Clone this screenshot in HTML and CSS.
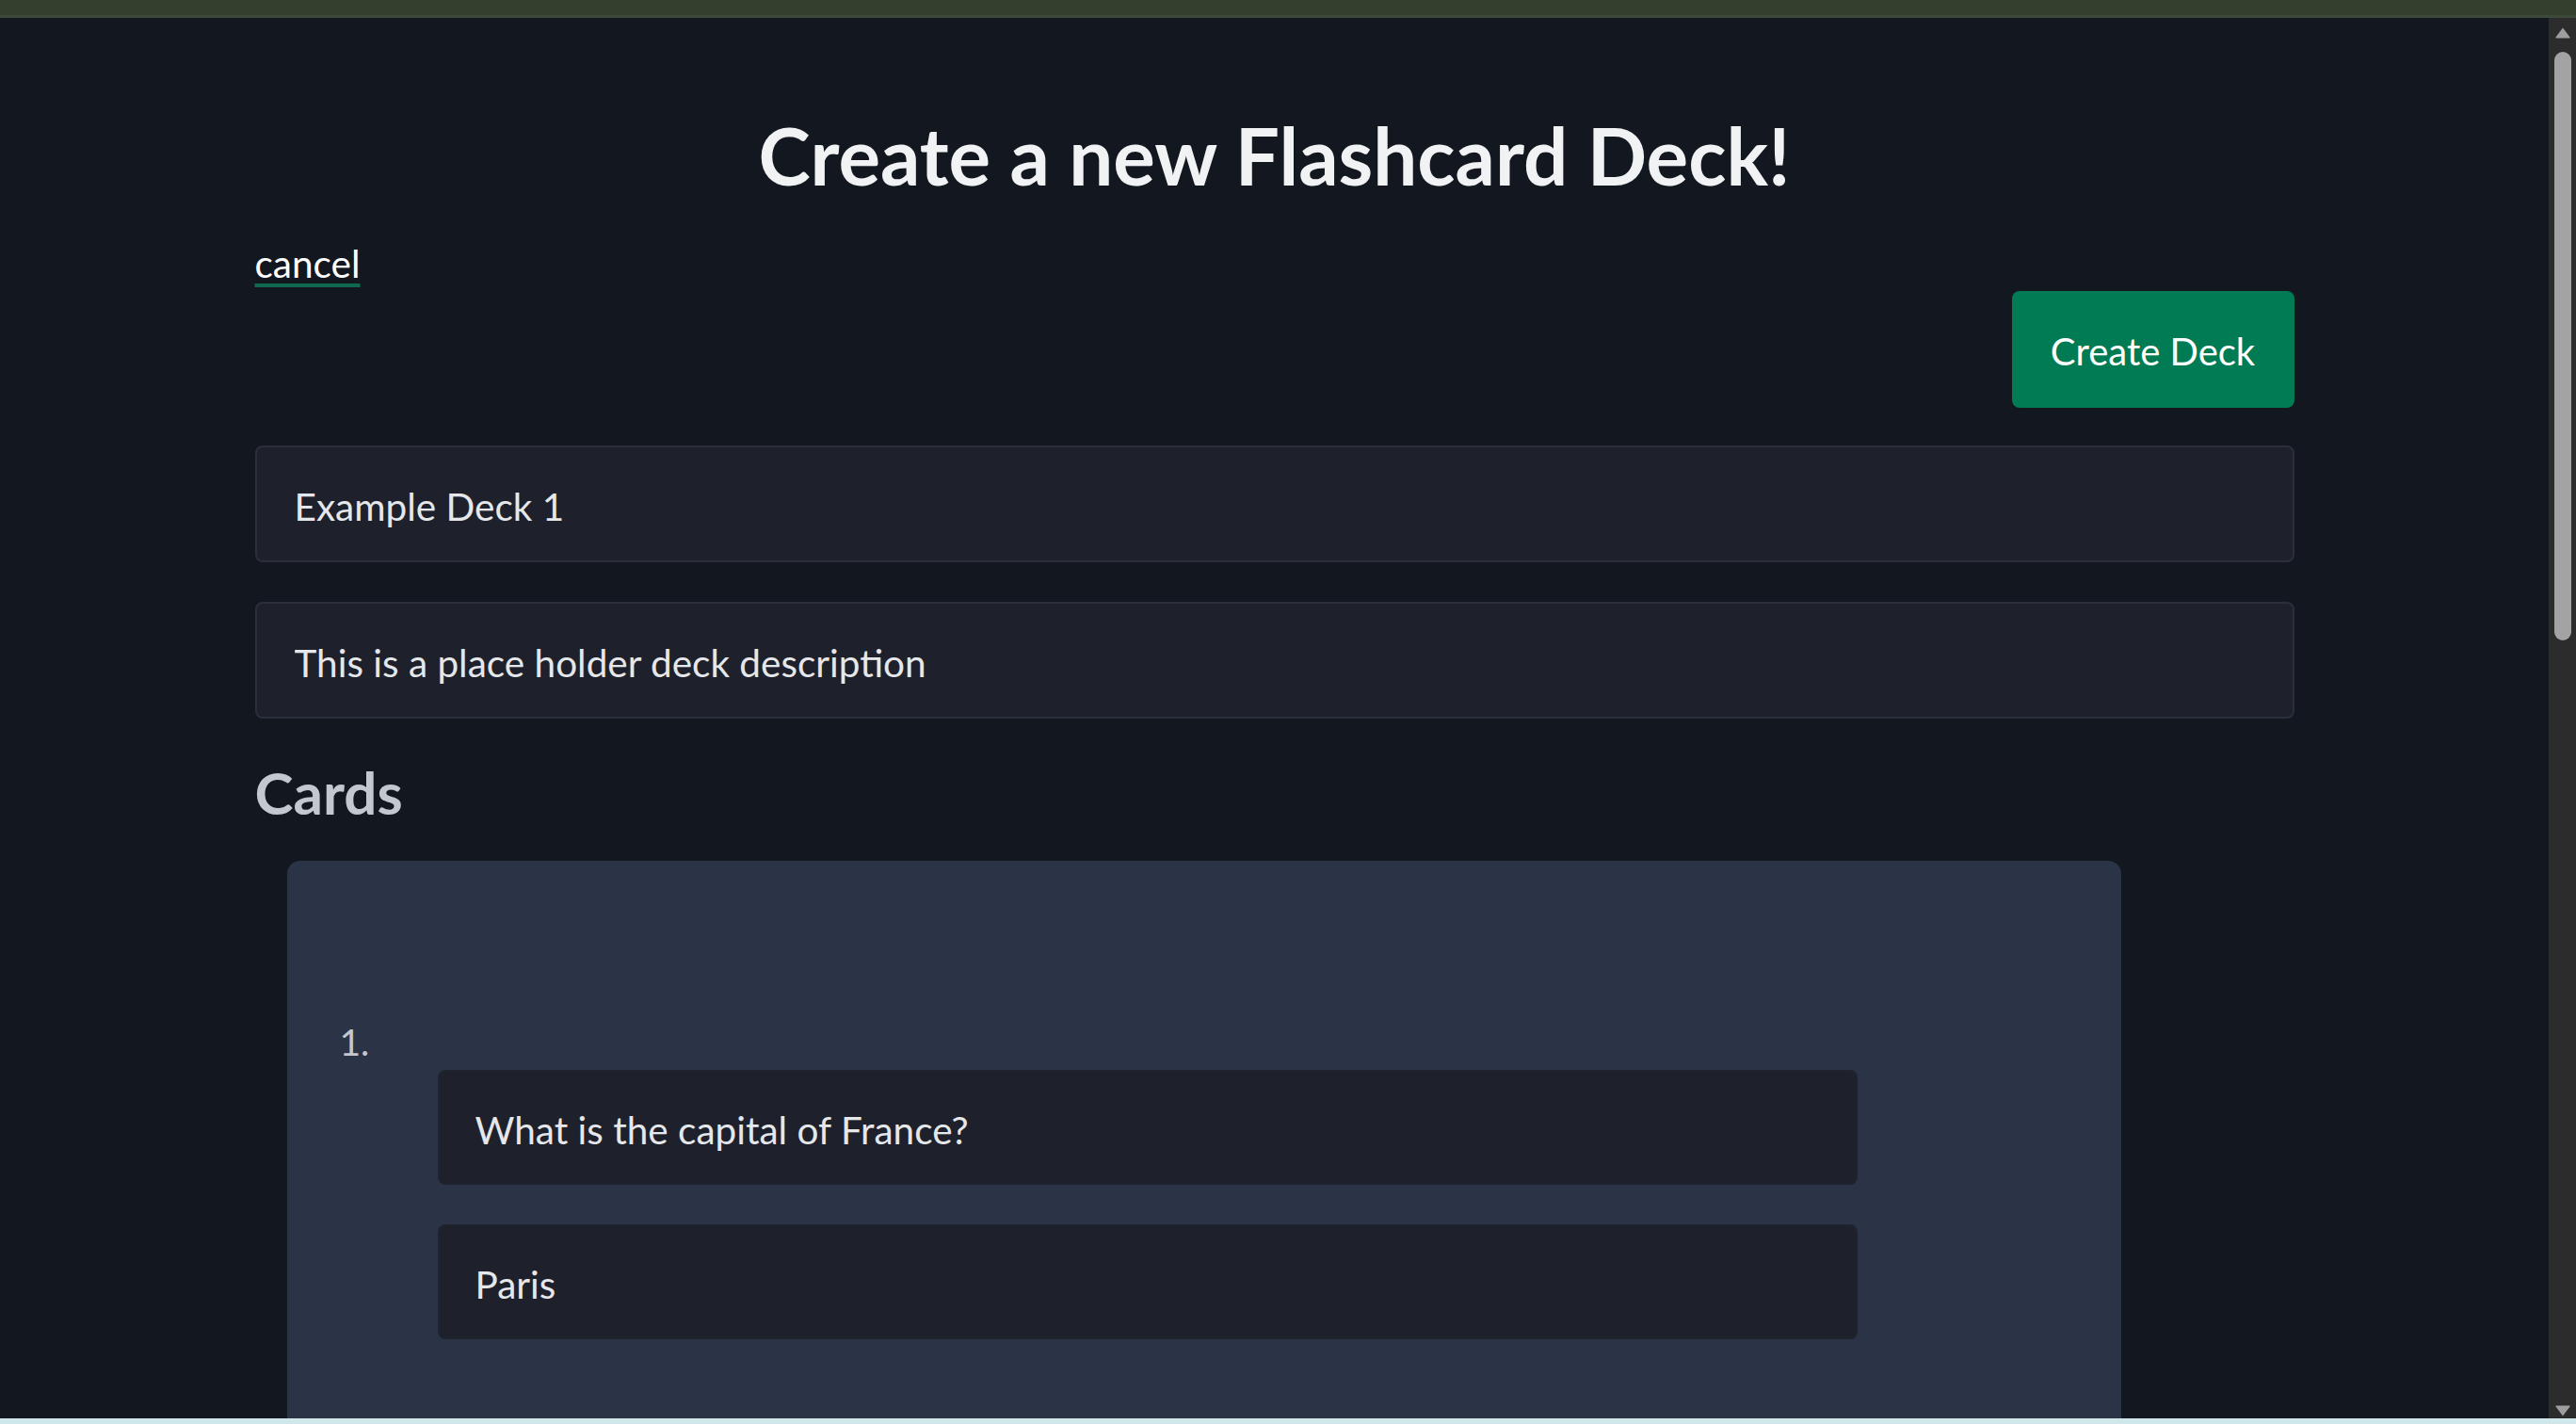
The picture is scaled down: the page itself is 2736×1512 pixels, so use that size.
FILE: index.html
```html
<!DOCTYPE html>
<html lang="en">
<head>
<meta charset="utf-8">
<title>Create a new Flashcard Deck!</title>
<link rel="stylesheet" href="styles.css">
</head>
<body>
<div class="topbar"></div>
<div class="frame">
  <main class="page">
    <div class="container">
      <h1 class="title">Create a new Flashcard Deck!</h1>
      <div class="cancel-row"><a class="cancel" href="#">cancel</a></div>
      <div class="actions"><button class="btn-create" type="button">Create Deck</button></div>
      <input class="field" type="text" value="Example Deck 1">
      <input class="field field-gap" type="text" value="This is a place holder deck description">
      <h2 class="section-title">Cards</h2>
      <ol class="card-list">
        <li class="card">
          <span class="card-num">1.</span>
          <div class="card-fields">
            <input class="card-input" type="text" value="What is the capital of France?">
            <input class="card-input" type="text" value="Paris">
          </div>
        </li>
      </ol>
    </div>
  </main>
  <div class="scrollbar">
    <svg class="sb-arrow" width="18" height="13" viewBox="0 0 18 13"><path d="M9 1.5 L16.5 11.5 Q17 12.5 16 12.5 L2 12.5 Q1 12.5 1.5 11.5 Z" fill="#9e9e9e"/></svg>
    <div class="sb-thumb"></div>
    <div class="sb-space"></div>
    <svg class="sb-arrow" width="18" height="14" viewBox="0 0 18 14"><path d="M9 12.5 L16.5 2.5 Q17 1.5 16 1.5 L2 1.5 Q1 1.5 1.5 2.5 Z" fill="#9e9e9e"/></svg>
  </div>
</div>
<div class="bottomstrip"></div>
</body>
</html>
```
FILE: styles.css
```css
html, body {
  margin: 0;
  padding: 0;
  height: 100%;
  overflow: hidden;
}
body {
  display: flex;
  flex-direction: column;
  background: #13171f;
  font-family: "Lato", "Liberation Sans", sans-serif;
  color: #e5e7eb;
}
.topbar {
  height: 16px;
  flex: none;
  background: #343f2e;
  border-bottom: 3px solid #3e4a39;
}
.frame {
  flex: 1;
  display: flex;
  min-height: 0;
}
.page {
  flex: 1;
  overflow: hidden;
  background: #13171f;
}
.container {
  width: 2166px;
  margin: 0 auto;
  padding-top: 97px;
  display: flex;
  flex-direction: column;
}
.title {
  margin: 0;
  font-size: 83.5px;
  line-height: 98px;
  font-weight: 700;
  text-align: center;
  color: #f1f2f4;
}
.cancel-row {
  margin-top: 42px;
  height: 48px;
  font-size: 40.5px;
  line-height: 48px;
}
.cancel {
  color: #ffffff;
  text-decoration: underline;
  text-decoration-color: #10694f;
  text-decoration-thickness: 4px;
  text-underline-offset: 6px;
}
.actions {
  margin-top: 5px;
  display: flex;
  justify-content: flex-end;
}
.btn-create {
  width: 300px;
  height: 124px;
  border: none;
  border-radius: 8px;
  background: #007b53;
  color: #ffffff;
  font-family: inherit;
  font-size: 40px;
  line-height: 50px;
  padding: 3px 0 0;
}
.field {
  box-sizing: border-box;
  display: block;
  width: 100%;
  height: 124px;
  margin: 40px 0 0;
  padding: 4px 40px 0;
  background: #1e212b;
  border: 2px solid #2a2f3b;
  border-radius: 8px;
  color: #e5e7eb;
  font-family: inherit;
  font-size: 40.5px;
  line-height: 50px;
  outline: none;
}
.field-gap {
  margin-top: 42px;
}
.section-title {
  margin: 41px 0 0;
  font-size: 62px;
  line-height: 74px;
  font-weight: 700;
  color: #c3c7cf;
}
.card-list {
  list-style: none;
  margin: 36px 0 0 34px;
  padding: 0;
}
.card {
  box-sizing: border-box;
  width: 1948px;
  padding: 168px 0 200px 56px;
  background: #2b3346;
  border-radius: 14px;
}
.card-num {
  display: block;
  font-size: 39px;
  line-height: 48px;
  color: #c3c7cf;
}
.card-fields {
  margin: 6px 0 0 104px;
  width: 1508px;
  display: flex;
  flex-direction: column;
  gap: 42px;
}
.card-input {
  box-sizing: border-box;
  display: block;
  width: 100%;
  height: 122px;
  margin: 0;
  padding: 4px 38px 0;
  background: #1e212b;
  border: 2px solid #1f232d;
  border-radius: 8px;
  color: #e5e7eb;
  font-family: inherit;
  font-size: 40.5px;
  line-height: 50px;
  outline: none;
}
.scrollbar {
  flex: none;
  width: 29px;
  background: #2c2c2c;
  display: flex;
  flex-direction: column;
  align-items: flex-start;
  padding-left: 6px;
  box-sizing: border-box;
}
.sb-arrow {
  display: block;
  flex: none;
}
.scrollbar .sb-arrow:first-child {
  margin-top: 9px;
}
.sb-thumb {
  flex: none;
  width: 18px;
  height: 625px;
  margin-top: 14px;
  border-radius: 9px;
  background: #a3a3a3;
}
.sb-space {
  flex: 1;
}
.scrollbar .sb-arrow:last-child {
  margin-bottom: 1px;
}
.bottomstrip {
  flex: none;
  height: 6px;
  background: #cfe6ea;
}
```
